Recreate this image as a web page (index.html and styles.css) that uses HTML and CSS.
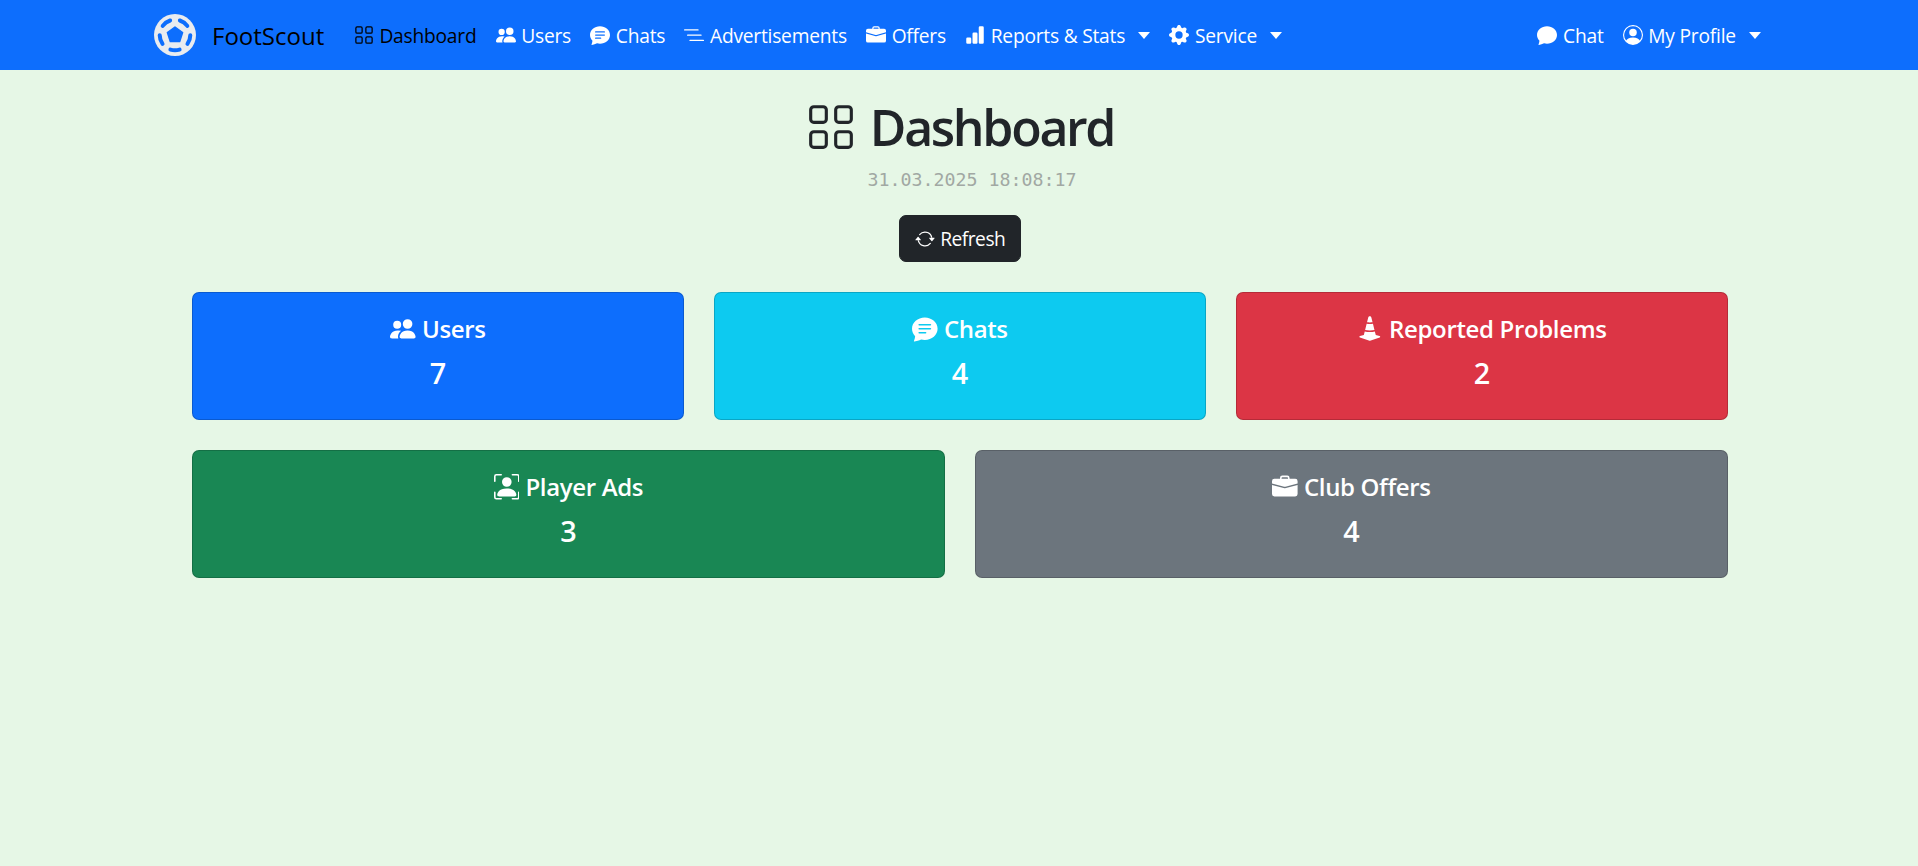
FILE: index.html
```html
<!DOCTYPE html>
<html lang="en">
<head>
<meta charset="utf-8">
<title>FootScout</title>
<link rel="stylesheet" href="styles.css">
</head>
<body>
<nav class="navbar">
  <div class="nav-left">
    <a class="brand">
      <svg class="logo" viewBox="-21 -21 42 42">
        <circle r="21" fill="#e9ecef"/>
        <path class="hole-fill" d="M0 -8 7.6 -2.5 4.7 6.5H-4.7L-7.6 -2.5Z"/>
        <path class="hole" d="M-4.6 14.6A15.3 15.3 0 0 0 4.6 14.6"/>
        <path class="hole" transform="rotate(72)" d="M-4.6 14.6A15.3 15.3 0 0 0 4.6 14.6"/>
        <path class="hole" transform="rotate(144)" d="M-4.6 14.6A15.3 15.3 0 0 0 4.6 14.6"/>
        <path class="hole" transform="rotate(216)" d="M-4.6 14.6A15.3 15.3 0 0 0 4.6 14.6"/>
        <path class="hole" transform="rotate(288)" d="M-4.6 14.6A15.3 15.3 0 0 0 4.6 14.6"/>
      </svg>
      <span>FootScout</span>
    </a>
    <a class="nav-link active"><svg class="ico" viewBox="0 0 16 16"><path d="M1 2.5A1.5 1.5 0 0 1 2.5 1h3A1.5 1.5 0 0 1 7 2.5v3A1.5 1.5 0 0 1 5.5 7h-3A1.5 1.5 0 0 1 1 5.5zM2.5 2a.5.5 0 0 0-.5.5v3a.5.5 0 0 0 .5.5h3a.5.5 0 0 0 .5-.5v-3a.5.5 0 0 0-.5-.5zm6.5.5A1.5 1.5 0 0 1 10.5 1h3A1.5 1.5 0 0 1 15 2.5v3A1.5 1.5 0 0 1 13.5 7h-3A1.5 1.5 0 0 1 9 5.5zm1.5-.5a.5.5 0 0 0-.5.5v3a.5.5 0 0 0 .5.5h3a.5.5 0 0 0 .5-.5v-3a.5.5 0 0 0-.5-.5zM1 10.5A1.5 1.5 0 0 1 2.5 9h3A1.5 1.5 0 0 1 7 10.5v3A1.5 1.5 0 0 1 5.5 15h-3A1.5 1.5 0 0 1 1 13.5zm1.5-.5a.5.5 0 0 0-.5.5v3a.5.5 0 0 0 .5.5h3a.5.5 0 0 0 .5-.5v-3a.5.5 0 0 0-.5-.5zm6.5.5A1.5 1.5 0 0 1 10.5 9h3a1.5 1.5 0 0 1 1.5 1.5v3a1.5 1.5 0 0 1-1.5 1.5h-3A1.5 1.5 0 0 1 9 13.5zm1.5-.5a.5.5 0 0 0-.5.5v3a.5.5 0 0 0 .5.5h3a.5.5 0 0 0 .5-.5v-3a.5.5 0 0 0-.5-.5z"/></svg>Dashboard</a>
    <a class="nav-link"><svg class="ico" viewBox="0 0 16 16"><path d="M7 14s-1 0-1-1 1-4 5-4 5 3 5 4-1 1-1 1zm4-6a3 3 0 1 0 0-6 3 3 0 0 0 0 6m-5.784 6A2.24 2.24 0 0 1 5 13c0-1.355.68-2.75 1.936-3.72A6.3 6.3 0 0 0 5 9c-4 0-5 3-5 4s1 1 1 1zM4.5 8a2.5 2.5 0 1 0 0-5 2.5 2.5 0 0 0 0 5"/></svg>Users</a>
    <a class="nav-link"><svg class="ico" viewBox="0 0 16 16"><path d="M16 8c0 3.866-3.582 7-8 7a9 9 0 0 1-2.347-.306c-.584.296-1.925.864-4.181 1.234-.2.032-.352-.176-.273-.362.354-.836.674-1.95.77-2.966C.744 11.37 0 9.76 0 8c0-3.866 3.582-7 8-7s8 3.134 8 7M4.5 5a.5.5 0 0 0 0 1h7a.5.5 0 0 0 0-1zm0 2.5a.5.5 0 0 0 0 1h7a.5.5 0 0 0 0-1zm0 2.5a.5.5 0 0 0 0 1h4a.5.5 0 0 0 0-1z"/></svg>Chats</a>
    <a class="nav-link"><svg class="ico" viewBox="0 0 16 16"><rect x="0" y="3.3" width="11.7" height="1.1" rx=".5"/><rect x="2.4" y="7.5" width="11.7" height="1.1" rx=".5"/><rect x="4.3" y="11.7" width="11.7" height="1.1" rx=".5"/></svg>Advertisements</a>
    <a class="nav-link"><svg class="ico" viewBox="0 0 16 16"><path d="M6.5 1A1.5 1.5 0 0 0 5 2.5V3H1.5A1.5 1.5 0 0 0 0 4.5v1.384l7.614 2.03a1.5 1.5 0 0 0 .772 0L16 5.884V4.5A1.5 1.5 0 0 0 14.5 3H11v-.5A1.5 1.5 0 0 0 9.5 1zm0 1h3a.5.5 0 0 1 .5.5V3H6v-.5a.5.5 0 0 1 .5-.5"/><path d="M0 12.5A1.5 1.5 0 0 0 1.5 14h13a1.5 1.5 0 0 0 1.5-1.5V6.85L8.129 8.947a.5.5 0 0 1-.258 0L0 6.85z"/></svg>Offers</a>
    <a class="nav-link"><svg class="ico" viewBox="0 0 16 16"><path d="M1 11a1 1 0 0 1 1-1h2a1 1 0 0 1 1 1v3a1 1 0 0 1-1 1H2a1 1 0 0 1-1-1zm5-4a1 1 0 0 1 1-1h2a1 1 0 0 1 1 1v7a1 1 0 0 1-1 1H7a1 1 0 0 1-1-1zm5-5a1 1 0 0 1 1-1h2a1 1 0 0 1 1 1v12a1 1 0 0 1-1 1h-2a1 1 0 0 1-1-1z"/></svg>Reports &amp; Stats<i class="caret"></i></a>
    <a class="nav-link"><svg class="ico" viewBox="0 0 16 16"><path d="M9.405 1.05c-.413-1.4-2.397-1.4-2.81 0l-.1.34a1.464 1.464 0 0 1-2.105.872l-.31-.17c-1.283-.698-2.686.705-1.987 1.987l.169.311c.446.82.023 1.841-.872 2.105l-.34.1c-1.4.413-1.4 2.397 0 2.81l.34.1a1.464 1.464 0 0 1 .872 2.105l-.17.31c-.698 1.283.705 2.686 1.987 1.987l.311-.169a1.464 1.464 0 0 1 2.105.872l.1.34c.413 1.4 2.397 1.4 2.81 0l.1-.34a1.464 1.464 0 0 1 2.105-.872l.31.17c1.283.698 2.686-.705 1.987-1.987l-.169-.311a1.464 1.464 0 0 1 .872-2.105l.34-.1c1.4-.413 1.4-2.397 0-2.81l-.34-.1a1.464 1.464 0 0 1-.872-2.105l.17-.31c.698-1.283-.705-2.686-1.987-1.987l-.311.169a1.464 1.464 0 0 1-2.105-.872zM8 10.93a2.929 2.929 0 1 1 0-5.86 2.929 2.929 0 0 1 0 5.858z"/></svg>Service<i class="caret"></i></a>
  </div>
  <div class="nav-right">
    <a class="nav-link"><svg class="ico" viewBox="0 0 16 16"><path d="M8 15c4.418 0 8-3.134 8-7s-3.582-7-8-7-8 3.134-8 7c0 1.76.743 3.37 1.97 4.6-.097 1.016-.417 2.13-.771 2.966-.079.186.074.394.273.362 2.256-.37 3.597-.938 4.18-1.234A9 9 0 0 0 8 15"/></svg>Chat</a>
    <a class="nav-link"><svg class="ico" viewBox="0 0 16 16"><path d="M11 6a3 3 0 1 1-6 0 3 3 0 0 1 6 0"/><path fill-rule="evenodd" d="M0 8a8 8 0 1 1 16 0A8 8 0 0 1 0 8m8-7a7 7 0 0 0-5.468 11.37C3.242 11.226 4.805 10 8 10s4.757 1.225 5.468 2.37A7 7 0 0 0 8 1"/></svg>My Profile<i class="caret"></i></a>
  </div>
</nav>
<main class="page">
  <h1 class="title"><svg class="title-ico" viewBox="0 0 16 16"><path d="M1 2.5A1.5 1.5 0 0 1 2.5 1h3A1.5 1.5 0 0 1 7 2.5v3A1.5 1.5 0 0 1 5.5 7h-3A1.5 1.5 0 0 1 1 5.5zM2.5 2a.5.5 0 0 0-.5.5v3a.5.5 0 0 0 .5.5h3a.5.5 0 0 0 .5-.5v-3a.5.5 0 0 0-.5-.5zm6.5.5A1.5 1.5 0 0 1 10.5 1h3A1.5 1.5 0 0 1 15 2.5v3A1.5 1.5 0 0 1 13.5 7h-3A1.5 1.5 0 0 1 9 5.5zm1.5-.5a.5.5 0 0 0-.5.5v3a.5.5 0 0 0 .5.5h3a.5.5 0 0 0 .5-.5v-3a.5.5 0 0 0-.5-.5zM1 10.5A1.5 1.5 0 0 1 2.5 9h3A1.5 1.5 0 0 1 7 10.5v3A1.5 1.5 0 0 1 5.5 15h-3A1.5 1.5 0 0 1 1 13.5zm1.5-.5a.5.5 0 0 0-.5.5v3a.5.5 0 0 0 .5.5h3a.5.5 0 0 0 .5-.5v-3a.5.5 0 0 0-.5-.5zm6.5.5A1.5 1.5 0 0 1 10.5 9h3a1.5 1.5 0 0 1 1.5 1.5v3a1.5 1.5 0 0 1-1.5 1.5h-3A1.5 1.5 0 0 1 9 13.5zm1.5-.5a.5.5 0 0 0-.5.5v3a.5.5 0 0 0 .5.5h3a.5.5 0 0 0 .5-.5v-3a.5.5 0 0 0-.5-.5z"/></svg>Dashboard</h1>
  <p class="date">31.03.2025 18:08:17</p>
  <button class="refresh"><svg class="ico" viewBox="0 0 16 16"><path d="M11.534 7h3.932a.25.25 0 0 1 .192.41l-1.966 2.36a.25.25 0 0 1-.384 0l-1.966-2.36a.25.25 0 0 1 .192-.41m-11 2h3.932a.25.25 0 0 0 .192-.41L2.692 6.23a.25.25 0 0 0-.384 0L.342 8.59A.25.25 0 0 0 .534 9"/><path fill-rule="evenodd" d="M8 3c-1.552 0-2.94.707-3.857 1.818a.5.5 0 1 1-.771-.636A6.002 6.002 0 0 1 13.917 7H12.9A5 5 0 0 0 8 3M3.1 9a5.002 5.002 0 0 0 8.757 2.182.5.5 0 1 1 .771.636A6.002 6.002 0 0 1 2.083 9z"/></svg>Refresh</button>
  <section class="row row-3">
    <div class="card blue"><h5><svg class="ico" viewBox="0 0 16 16"><path d="M7 14s-1 0-1-1 1-4 5-4 5 3 5 4-1 1-1 1zm4-6a3 3 0 1 0 0-6 3 3 0 0 0 0 6m-5.784 6A2.24 2.24 0 0 1 5 13c0-1.355.68-2.75 1.936-3.72A6.3 6.3 0 0 0 5 9c-4 0-5 3-5 4s1 1 1 1zM4.5 8a2.5 2.5 0 1 0 0-5 2.5 2.5 0 0 0 0 5"/></svg>Users</h5><p>7</p></div>
    <div class="card cyan"><h5><svg class="ico" viewBox="0 0 16 16"><path d="M16 8c0 3.866-3.582 7-8 7a9 9 0 0 1-2.347-.306c-.584.296-1.925.864-4.181 1.234-.2.032-.352-.176-.273-.362.354-.836.674-1.95.77-2.966C.744 11.37 0 9.76 0 8c0-3.866 3.582-7 8-7s8 3.134 8 7M4.5 5a.5.5 0 0 0 0 1h7a.5.5 0 0 0 0-1zm0 2.5a.5.5 0 0 0 0 1h7a.5.5 0 0 0 0-1zm0 2.5a.5.5 0 0 0 0 1h4a.5.5 0 0 0 0-1z"/></svg>Chats</h5><p>4</p></div>
    <div class="card red"><h5><svg class="ico" viewBox="0 0 16 16"><path d="m9.97 4.88.953 3.811C10.159 8.878 9.14 9 8 9s-2.158-.122-2.923-.309L6.03 4.88C6.635 4.957 7.3 5 8 5s1.365-.043 1.97-.12m-.245-.978L8.97.88C8.718-.13 7.282-.13 7.03.88L6.275 3.9C6.8 3.965 7.382 4 8 4s1.2-.035 1.725-.098m4.396 8.613a.5.5 0 0 1 .037.96l-6 2a.5.5 0 0 1-.316 0l-6-2a.5.5 0 0 1 .037-.96l2.391-.598.565-2.257c.862.212 1.964.339 3.165.339s2.303-.127 3.165-.339l.565 2.257z"/></svg>Reported Problems</h5><p>2</p></div>
  </section>
  <section class="row row-2">
    <div class="card green"><h5><svg class="ico" viewBox="0 0 16 16"><path d="M1.5 1a.5.5 0 0 0-.5.5v3a.5.5 0 0 1-1 0v-3A1.5 1.5 0 0 1 1.5 0h3a.5.5 0 0 1 0 1zM11 .5a.5.5 0 0 1 .5-.5h3A1.5 1.5 0 0 1 16 1.5v3a.5.5 0 0 1-1 0v-3a.5.5 0 0 0-.5-.5h-3a.5.5 0 0 1-.5-.5M.5 11a.5.5 0 0 1 .5.5v3a.5.5 0 0 0 .5.5h3a.5.5 0 0 1 0 1h-3A1.5 1.5 0 0 1 0 14.5v-3a.5.5 0 0 1 .5-.5m15 0a.5.5 0 0 1 .5.5v3a1.5 1.5 0 0 1-1.5 1.5h-3a.5.5 0 0 1 0-1h3a.5.5 0 0 0 .5-.5v-3a.5.5 0 0 1 .5-.5"/><path d="M3 14s-1 0-1-1 1-4 6-4 6 3 6 4-1 1-1 1zm8-9a3 3 0 1 1-6 0 3 3 0 0 1 6 0"/></svg>Player Ads</h5><p>3</p></div>
    <div class="card grey"><h5><svg class="ico" viewBox="0 0 16 16"><path d="M6.5 1A1.5 1.5 0 0 0 5 2.5V3H1.5A1.5 1.5 0 0 0 0 4.5v1.384l7.614 2.03a1.5 1.5 0 0 0 .772 0L16 5.884V4.5A1.5 1.5 0 0 0 14.5 3H11v-.5A1.5 1.5 0 0 0 9.5 1zm0 1h3a.5.5 0 0 1 .5.5V3H6v-.5a.5.5 0 0 1 .5-.5"/><path d="M0 12.5A1.5 1.5 0 0 0 1.5 14h13a1.5 1.5 0 0 0 1.5-1.5V6.85L8.129 8.947a.5.5 0 0 1-.258 0L0 6.85z"/></svg>Club Offers</h5><p>4</p></div>
  </section>
</main>
</body>
</html>
```
FILE: styles.css
```css
* { box-sizing: border-box; }
html, body { height: 100%; }
body {
  margin: 0;
  background: #e6f7e6;
  color: #212529;
  font-family: "Open Sans", "Noto Sans", sans-serif;
  font-size: 19.2px;
  overflow: hidden;
}
.ico { width: 20px; height: 20px; fill: currentColor; flex: none; }
.navbar {
  height: 70px;
  background: #0d6efd;
  display: flex;
  justify-content: space-between;
  align-items: center;
  padding: 0 147.5px 0 154px;
  color: #fff;
}
.nav-left, .nav-right { display: flex; align-items: center; }
.brand {
  display: flex;
  align-items: center;
  gap: 16px;
  color: #000;
  font-size: 24px;
  margin-right: 20px;
}
.logo { width: 42px; height: 42px; }
.hole { fill: none; stroke: #0d6efd; stroke-width: 4; stroke-linecap: round; }
.hole-fill { fill: #0d6efd; stroke: #0d6efd; stroke-width: 1.5; stroke-linejoin: round; }
.nav-link {
  display: flex;
  align-items: center;
  gap: 5.6px;
  padding: 0 9.6px;
  letter-spacing: -0.22px;
  white-space: nowrap;
}
.nav-link.active { color: #000; }
.caret {
  margin-left: 7.5px;
  border-top: 7px solid currentColor;
  border-left: 6px solid transparent;
  border-right: 6px solid transparent;
}
.page {
  width: 1536px;
  margin-left: 192px;
  display: flex;
  flex-direction: column;
  align-items: center;
}
.title {
  margin: 22px 0 0;
  display: flex;
  align-items: center;
  gap: 14px;
  font-size: 50px;
  font-weight: 600;
  line-height: 70px;
  letter-spacing: -2.3px;
}
.title-ico { width: 50px; height: 50px; fill: currentColor; }
.date {
  margin: 6px 0 0;
  padding-left: 24px;
  font-family: "DejaVu Sans Mono", monospace;
  font-size: 18.3px;
  line-height: 24px;
  color: #a1a8a3;
}
.refresh {
  margin: 23px 0 0;
  width: 122px;
  height: 47px;
  display: flex;
  align-items: center;
  justify-content: center;
  gap: 5.5px;
  border: 1px solid #212529;
  border-radius: 7px;
  background: #212529;
  color: #fff;
  font: inherit;
  letter-spacing: -0.5px;
}
.row { width: 100%; display: grid; gap: 30px; }
.row-3 { grid-template-columns: repeat(3, 1fr); margin-top: 30px; }
.row-2 { grid-template-columns: repeat(2, 1fr); margin-top: 30px; }
.card {
  height: 128px;
  border: 1px solid rgba(0, 0, 0, .175);
  border-radius: 7px;
  color: #fff;
  text-align: center;
  padding-top: 19px;
}
.card h5 {
  margin: 0;
  display: flex;
  align-items: center;
  justify-content: center;
  gap: 6px;
  font-size: 24px;
  font-weight: 600;
  line-height: 34px;
  letter-spacing: -0.35px;
}
.card h5 .ico { width: 25.6px; height: 25.6px; }
.card p {
  margin: 9px 0 0;
  font-size: 28.8px;
  font-weight: 600;
  line-height: 36px;
}
.blue { background: #0d6efd; }
.cyan { background: #0dcaf0; }
.red { background: #dc3545; }
.green { background: #198754; }
.grey { background: #6c757d; }
```
